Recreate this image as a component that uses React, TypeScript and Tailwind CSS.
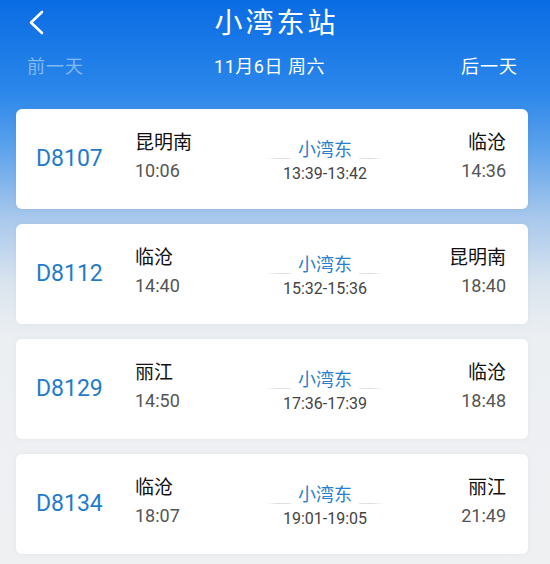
import React from "react";

type Train = {
  no: string;
  from: string;
  dep: string;
  stop: string;
  stay: string;
  to: string;
  arr: string;
};

const trains: Train[] = [
  { no: "D8107", from: "昆明南", dep: "10:06", stop: "小湾东", stay: "13:39-13:42", to: "临沧", arr: "14:36" },
  { no: "D8112", from: "临沧", dep: "14:40", stop: "小湾东", stay: "15:32-15:36", to: "昆明南", arr: "18:40" },
  { no: "D8129", from: "丽江", dep: "14:50", stop: "小湾东", stay: "17:36-17:39", to: "临沧", arr: "18:48" },
  { no: "D8134", from: "临沧", dep: "18:07", stop: "小湾东", stay: "19:01-19:05", to: "丽江", arr: "21:49" },
];

const font = "font-['Roboto','Noto_Sans_CJK_SC',sans-serif]";

const TrainCard = ({ t }: { t: Train }) => {
  return (
    <div className="h-[100px] ml-[16px] mr-[22px] bg-white rounded-[6px] shadow-[0_0_6px_rgba(0,0,0,0.04)] flex items-center pl-[20px] pr-[22px]">
      <div className="w-[99px] text-[23px] text-[#1f7ccc] leading-none mb-[2px]">{t.no}</div>
      <div className="w-[120px] flex flex-col mb-[5px]">
        <span className="text-[19px] text-[#111] leading-none">{t.from}</span>
        <span className="text-[18px] text-[#555] leading-none mt-[10px]">{t.dep}</span>
      </div>
      <div className="w-[140px] flex flex-col items-center pt-[5px]">
        <div className="flex items-center">
          <span className="w-[25px] h-[1px] bg-gradient-to-r from-transparent via-[#dcdcdc] to-[#e6e6e6] mt-[16px]" />
          <span className="text-[18px] text-[#2a80cc] leading-none px-[7px]">{t.stop}</span>
          <span className="w-[25px] h-[1px] bg-gradient-to-r from-[#e6e6e6] via-[#dcdcdc] to-transparent mt-[16px]" />
        </div>
        <span className="text-[16px] text-[#444] leading-none mt-[7px]">{t.stay}</span>
      </div>
      <div className="flex-1 flex flex-col items-end mb-[5px]">
        <span className="text-[19px] text-[#111] leading-none">{t.to}</span>
        <span className="text-[18px] text-[#555] leading-none mt-[10px]">{t.arr}</span>
      </div>
    </div>
  );
};

export default function App() {
  return (
    <div
      className={`w-[550px] h-[564px] overflow-hidden ${font} bg-[linear-gradient(180deg,#0a6ce4_0px,#2a86ea_90px,#5ea3ec_150px,#a6c7ec_215px,#dbe5ef_285px,#eceff2_340px,#eff0f2_564px)]`}
    >
      <div className="relative h-[44px] flex items-center justify-center">
        <svg
          className="absolute left-[27px] top-[10px]"
          width="19"
          height="25"
          viewBox="0 0 19 25"
          fill="none"
        >
          <path d="M15 2 L4 12.5 L15 23" stroke="white" strokeWidth="2.6" strokeLinecap="round" strokeLinejoin="round" />
        </svg>
        <span className="text-[28px] text-white tracking-[3px] pl-[3px] leading-none mt-[4px]">小湾东站</span>
      </div>
      <div className="h-[46px] flex items-center justify-between px-[27px]">
        <span className="text-[18px] text-[#84b8f0] tracking-[1px] leading-none">前一天</span>
        <span className="text-[18px] text-white leading-none tracking-[0.5px] mr-[6px]">11月6日 周六</span>
        <span className="text-[18px] text-white tracking-[1px] leading-none mr-[5px]">后一天</span>
      </div>
      <div className="flex flex-col gap-[15px] pt-[19px]">
        {trains.map((t) => (
          <TrainCard key={t.no} t={t} />
        ))}
      </div>
    </div>
  );
}
